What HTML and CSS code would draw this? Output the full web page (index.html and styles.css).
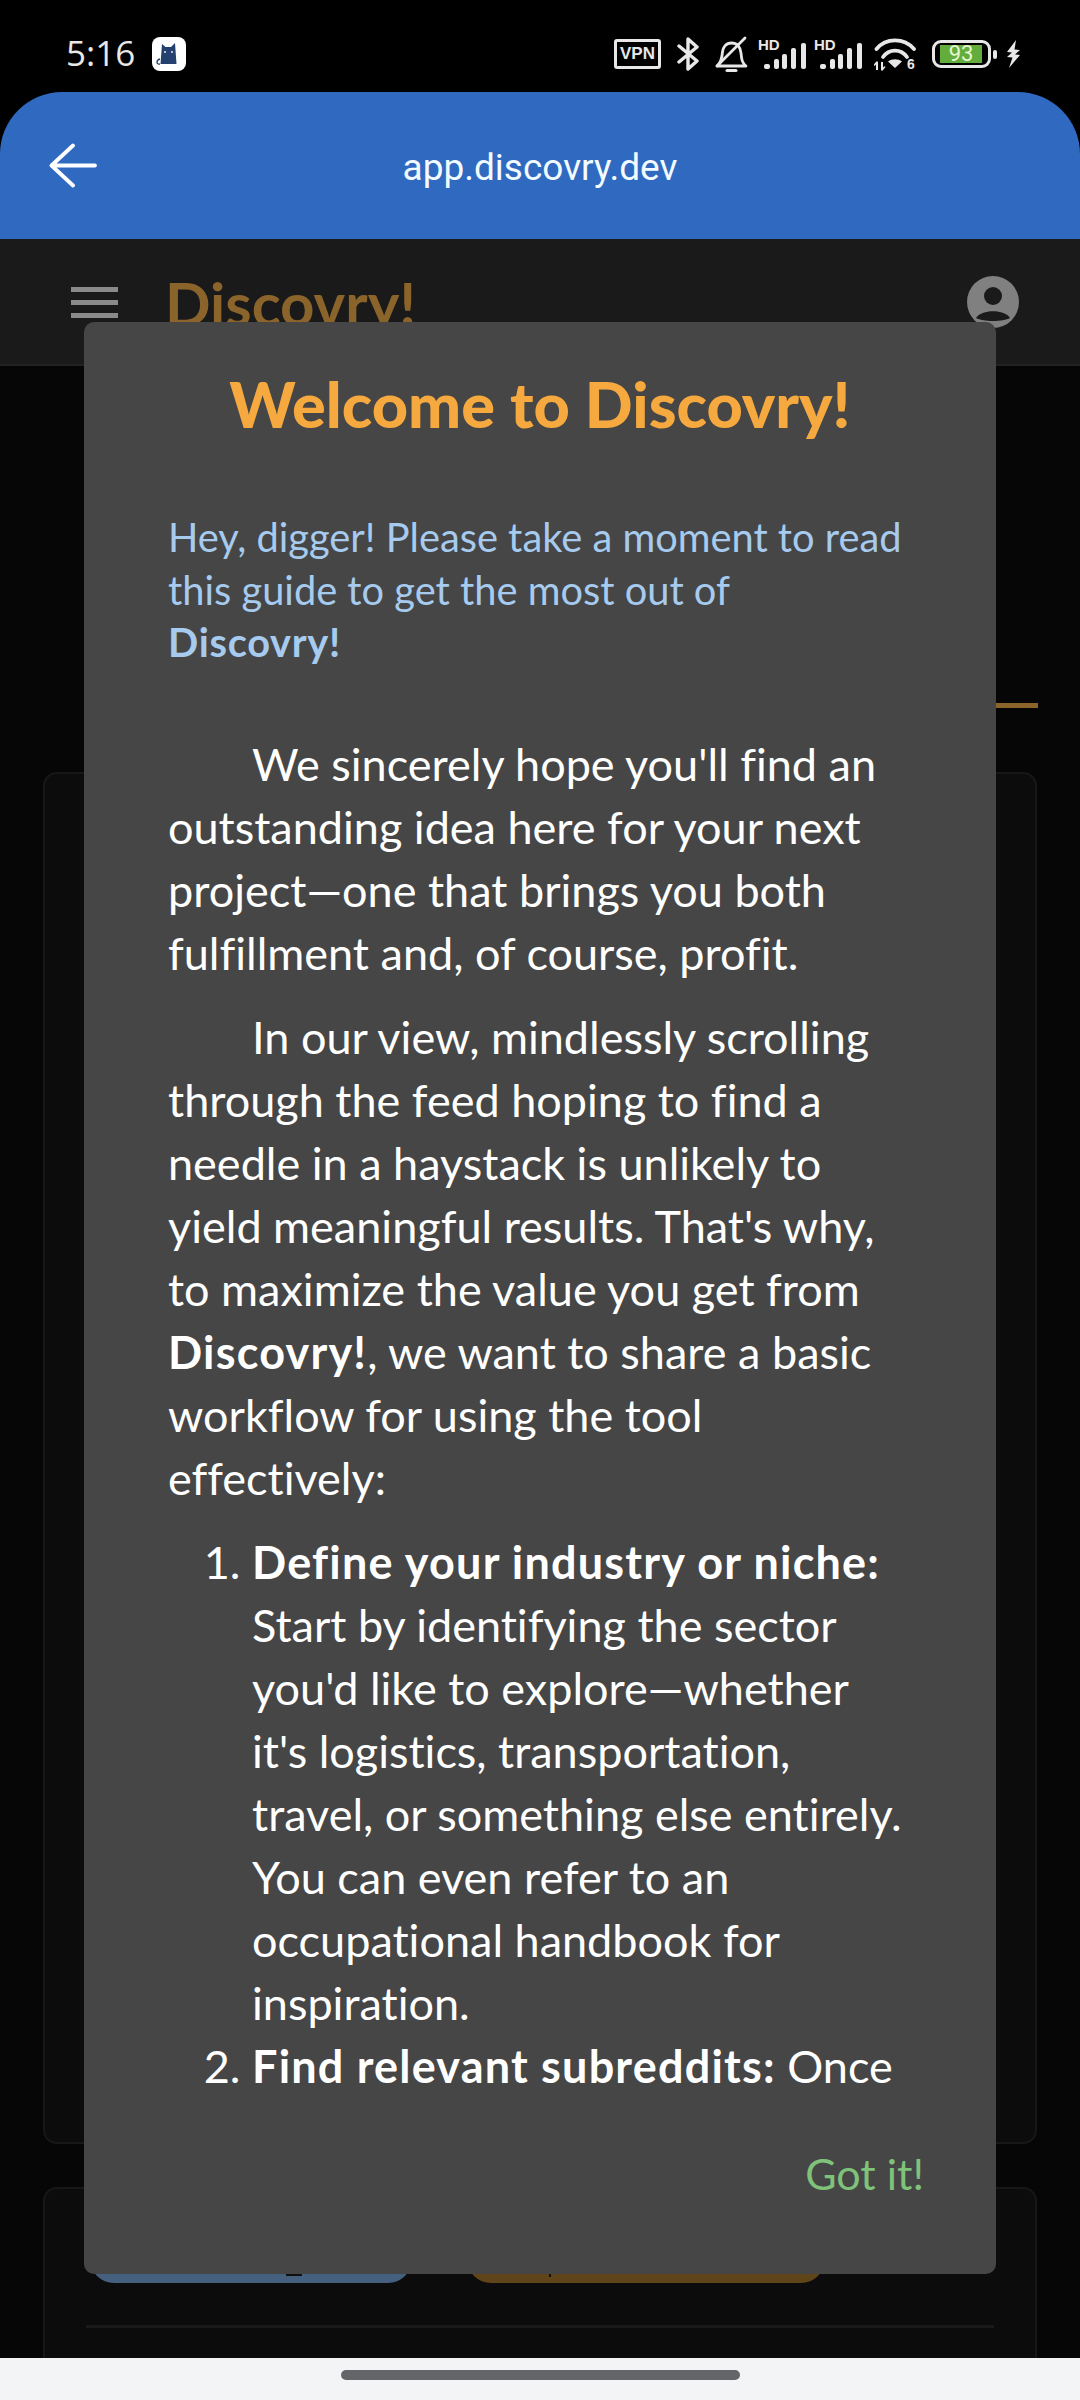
FILE: index.html
```html
<!DOCTYPE html>
<html lang="en">
<head>
  <meta charset="UTF-8">
  <meta name="viewport" content="width=device-width, initial-scale=1.0">
  <title>Discovry!</title>
  <link rel="stylesheet" href="styles.css">
</head>
<body>
  <!-- Status bar -->
  <div class="status-bar">
    <div class="status-left">
      <span class="clock">5:16</span>
      <div class="app-badge">
        <svg width="34" height="34" viewBox="0 0 34 34">
          <path d="M10 7 L13.5 10 H19 L23 6 L24.5 27 H8.5 Z" fill="#24406f"/>
          <path d="M8 22 C4 23 4 28 8 27" fill="none" stroke="#24406f" stroke-width="1.3"/>
          <circle cx="13" cy="15" r="0.9" fill="#fff"/>
          <circle cx="20" cy="15" r="0.9" fill="#fff"/>
        </svg>
      </div>
    </div>
    <div class="status-right">
      <div class="vpn-tag">VPN</div>
      <svg class="ico-bt" width="23" height="36" viewBox="0 0 23 36" fill="none" stroke="#e8e8e8" stroke-width="3.4" stroke-linejoin="round" stroke-linecap="round">
        <path d="M2 10 L20 25 L11 33 V3 L20 11 L2 26"/>
      </svg>
      <svg class="ico-bell" width="33" height="36" viewBox="0 0 33 36" fill="none" stroke="#e8e8e8" stroke-width="2.8" stroke-linecap="round" stroke-linejoin="round">
        <path d="M2 30 H31 C27 27 26.500 23 26 17 C25.500 11 22 7 16.500 7 C11 7 8 11 7.500 16 C7 22 6 27 2 30 Z"/>
        <path d="M2 30 L30 2"/>
        <path d="M12 34.500 H21" stroke-width="3"/>
      </svg>
      <div class="signal">
        <span class="hd">HD</span>
        <svg width="42" height="26" viewBox="0 0 42 26" fill="#e8e8e8">
          <rect x="0" y="21" width="6" height="5" rx="2"/>
          <rect x="10" y="16" width="5" height="10" rx="2"/>
          <rect x="18" y="11" width="5" height="15" rx="2"/>
          <rect x="27" y="5" width="5" height="21" rx="2"/>
          <rect x="37" y="0" width="5" height="26" rx="2"/>
        </svg>
      </div>
      <div class="signal signal-second">
        <span class="hd">HD</span>
        <svg width="42" height="26" viewBox="0 0 42 26" fill="#e8e8e8">
          <rect x="0" y="21" width="6" height="5" rx="2"/>
          <rect x="10" y="16" width="5" height="10" rx="2"/>
          <rect x="18" y="11" width="5" height="15" rx="2"/>
          <rect x="27" y="5" width="5" height="21" rx="2"/>
          <rect x="37" y="0" width="5" height="26" rx="2"/>
        </svg>
      </div>
      <svg class="ico-wifi" width="43" height="34" viewBox="0 0 43 34" fill="none" stroke="#e8e8e8" stroke-width="3.8" stroke-linecap="round">
        <path d="M2.500 12 C12 0.500 30 0.500 40 12"/>
        <path d="M9 20 C15 11.500 27 11.500 33 20"/>
        <path d="M21 31 L14 24.500 C18 21.500 24 21.500 28 24.500 Z" fill="#e8e8e8" stroke="none"/>
        <path d="M3 25 V33 M8 25 V33" stroke-width="2" stroke-linecap="butt"/>
        <path d="M0.500 28 L3 25 M8 33 L10.500 30" stroke-width="1.600"/>
        <text x="33" y="32" class="wifi-six">6</text>
      </svg>
      <div class="battery">
        <div class="battery-body"><div class="battery-fill">93</div></div>
        <div class="battery-tip"></div>
      </div>
      <svg class="ico-bolt" width="15" height="28" viewBox="0 0 15 28" fill="#e8e8e8">
        <path d="M10 0 L1 12 L6 12.500 L1 17 L6.500 17.500 L3 28 L14 15 L9 14.500 L14 10 L8.500 9.500 Z"/>
      </svg>
    </div>
  </div>

  <!-- Browser bar -->
  <div class="browser-bar">
    <svg class="back" width="48" height="45" viewBox="0 0 48 45" fill="none" stroke="#fff" stroke-width="3.8" stroke-linecap="round" stroke-linejoin="round">
      <path d="M24 2.500 L2.500 22.500 L24 42.500 M2.500 22.500 H46"/>
    </svg>
    <span class="url">app.discovry.dev</span>
  </div>

  <!-- Page behind the dialog -->
  <div class="page">
    <div class="app-header">
      <div class="burger"><span></span><span></span><span></span></div>
      <div class="brand">Discovry!</div>
      <svg class="avatar" width="52" height="52" viewBox="0 0 52 52">
        <circle cx="26" cy="26" r="26" fill="#808080"/>
        <circle cx="26" cy="20" r="9" fill="#1a1a1a"/>
        <path d="M9 42 C14 33 38 33 43 42 C36 46 16 46 9 42 Z" fill="#1a1a1a"/>
      </svg>
    </div>
    <div class="tab-line-row"><div class="tab-line"></div></div>
    <div class="card card-first"></div>
    <div class="card card-second">
      <div class="pills">
        <div class="pill pill-blue"></div>
        <div class="pill pill-orange"></div>
      </div>
      <div class="card-divider"></div>
    </div>

    <!-- Dialog -->
    <div class="dialog">
      <h2 class="dialog-title">Welcome to Discovry!</h2>
      <div class="dialog-scroll">
        <p class="intro">Hey, digger! Please take a moment to read this guide to get the most out of <b>Discovry!</b></p>
        <p class="para">We sincerely hope you'll find an outstanding idea here for your next project—one that brings you both fulfillment and, of course, profit.</p>
        <p class="para">In our view, mindlessly scrolling through the feed hoping to find a needle in a haystack is unlikely to yield meaningful results. That's why, to maximize the value you get from <b>Discovry!</b>, we want to share a basic workflow for using the tool effectively:</p>
        <ol class="steps">
          <li><b>Define your industry or niche:</b> Start by identifying the sector you'd like to explore—whether it's logistics, transportation, travel, or something else entirely. You can even refer to an occupational handbook for inspiration.</li>
          <li><b>Find relevant subreddits:</b> Once</li>
        </ol>
      </div>
      <div class="dialog-actions"><span class="got-it">Got it!</span></div>
    </div>
  </div>

  <!-- Gesture bar -->
  <div class="nav-bar"><div class="nav-handle"></div></div>
</body>
</html>
```

FILE: styles.css
```css
* {
  box-sizing: border-box;
}
html, body {
  margin: 0;
  padding: 0;
}
body {
  width: 1080px;
  height: 2400px;
  overflow: hidden;
  background-color: #000;
  font-family: Lato, "Noto Sans", sans-serif;
  font-variant-ligatures: none;
  display: flex;
  flex-direction: column;
}
/* Status bar */
.status-bar {
  height: 92px;
  flex: none;
  display: flex;
  justify-content: space-between;
  align-items: center;
  padding: 16px 59px 0 66px;
  color: #e8e8e8;
}
.status-left {
  display: flex;
  align-items: center;
  gap: 17px;
}
.clock {
  font-family: "Open Sans", sans-serif;
  font-size: 35px;
  margin-top: -3px;
}
.app-badge {
  width: 34px;
  height: 34px;
  border-radius: 8px;
  background-color: #fff;
}
.status-right {
  display: flex;
  align-items: center;
}
.vpn-tag {
  width: 47px;
  height: 30px;
  border: 3px solid #e8e8e8;
  border-radius: 3px;
  font: bold 17px "Liberation Sans", sans-serif;
  display: flex;
  align-items: center;
  justify-content: center;
}
.ico-bt {
  margin-left: 16px;
}
.ico-bell {
  margin-left: 15px;
}
.signal {
  position: relative;
  width: 48px;
  height: 30px;
  margin-left: 10px;
  display: flex;
  align-items: flex-end;
  justify-content: flex-end;
}
.signal-second {
  margin-left: 8px;
}
.hd {
  position: absolute;
  left: 0;
  top: -2px;
  font: bold 15px/15px "Liberation Sans", sans-serif;
}
.ico-wifi {
  margin-left: 12px;
}
.wifi-six {
  font: bold 14px "Liberation Sans", sans-serif;
  fill: #e8e8e8;
  stroke: none;
}
.battery {
  display: flex;
  align-items: center;
  gap: 2px;
  margin-left: 15px;
}
.battery-body {
  width: 59px;
  height: 28px;
  border: 3px solid #e8e8e8;
  border-radius: 9px;
  padding: 2px 6px 2px 5px;
}
.battery-fill {
  height: 100%;
  background-color: #62ad3c;
  color: #e6f7d4;
  font: 22px/18px Roboto, sans-serif;
  text-align: center;
}
.battery-tip {
  width: 4px;
  height: 9px;
  background-color: #e8e8e8;
  border-radius: 2px;
}
.ico-bolt {
  margin-left: 9px;
}
/* Browser bar */
.browser-bar {
  height: 147px;
  flex: none;
  background-color: #3069c0;
  border-radius: 62px 62px 0 0;
  position: relative;
  display: flex;
  align-items: center;
  justify-content: center;
  padding-top: 4px;
}
.back {
  position: absolute;
  left: 49px;
  top: 51px;
}
.url {
  color: #f2fbff;
  font-family: Roboto, sans-serif;
  font-size: 37px;
}
/* Page behind the dialog */
.page {
  flex: 1;
  position: relative;
  background-color: #060606;
  overflow: hidden;
}
.app-header {
  height: 127px;
  background-color: #1a1a1a;
  border-bottom: 2px solid #222;
  display: flex;
  align-items: flex-start;
  padding: 48px 61px 0 71px;
}
.burger {
  width: 47px;
  display: flex;
  flex-direction: column;
  gap: 8px;
}
.burger span {
  height: 5px;
  background-color: #8a8a8a;
}
.brand {
  margin-left: 47px;
  margin-top: -20px;
  color: #8a642a;
  font-size: 60px;
  font-weight: 700;
}
.avatar {
  margin-left: auto;
  margin-top: -11px;
}
.tab-line-row {
  height: 406px;
  display: flex;
  justify-content: flex-end;
  padding: 337px 42px 0 0;
}
.tab-line {
  width: 100px;
  height: 5px;
  background-color: #8a642a;
}
.card {
  margin: 0 43px;
  border: 2px solid #171717;
  border-radius: 14px;
  background-color: #0c0c0c;
}
.card-first {
  height: 1372px;
}
.card-second {
  height: 400px;
  margin-top: 43px;
  padding: 0 41px;
}
.pills {
  display: flex;
  gap: 55px;
  padding-top: 39px;
}
.pill {
  height: 55px;
  border-radius: 0 0 24px 24px;
  position: relative;
}
.pill-blue {
  width: 322px;
  margin-left: 4px;
  background-color: #45607f;
}
/* bottoms of the letters that stick out under the dialog */
.pill-blue::after {
  content: "";
  position: absolute;
  left: 196px;
  bottom: 7px;
  width: 16px;
  height: 2px;
  background-color: #101010;
}
.pill-orange {
  width: 358px;
  background-color: #5f4519;
}
.pill-orange::after {
  content: "";
  position: absolute;
  left: 82px;
  bottom: 6px;
  width: 2px;
  height: 3px;
  background-color: #101010;
}
.card-divider {
  height: 3px;
  margin-top: 42px;
  background-color: #1a1a1a;
}
/* Dialog */
.dialog {
  position: absolute;
  left: 84px;
  top: 83px;
  width: 912px;
  height: 1952px;
  background-color: #464646;
  border-radius: 10px;
  padding: 47px 84px 0;
  display: flex;
  flex-direction: column;
}
.dialog-title {
  margin: 0;
  color: #f5a93f;
  font-size: 63px;
  font-weight: 900;
  text-align: center;
  line-height: 70px;
}
.dialog-scroll {
  height: 1595px;
  margin-top: 72px;
  overflow: hidden;
  color: #fff;
}
.intro {
  margin: 0 0 64px;
  color: #a6cbee;
  font-size: 39.8px;
  line-height: 52.5px;
}
.intro b {
  display: block;
  letter-spacing: 0.7px;
}
.para {
  margin: 0 0 21px;
  font-size: 45px;
  line-height: 63px;
  text-indent: 84px;
}
.para b, .steps b {
  letter-spacing: 1.2px;
}
.steps {
  margin: 0;
  padding-left: 84px;
  font-size: 45px;
  line-height: 63px;
}
.dialog-actions {
  display: flex;
  justify-content: flex-end;
  margin: 43px -12px 0 0;
}
.got-it {
  color: #7fc27a;
  font-size: 43px;
  line-height: 50px;
}
/* Gesture bar */
.nav-bar {
  height: 42px;
  flex: none;
  background-color: #f2f4f6;
  display: flex;
  justify-content: center;
  padding-top: 12px;
}
.nav-handle {
  width: 399px;
  height: 10px;
  border-radius: 5px;
  background-color: #646569;
}
```
